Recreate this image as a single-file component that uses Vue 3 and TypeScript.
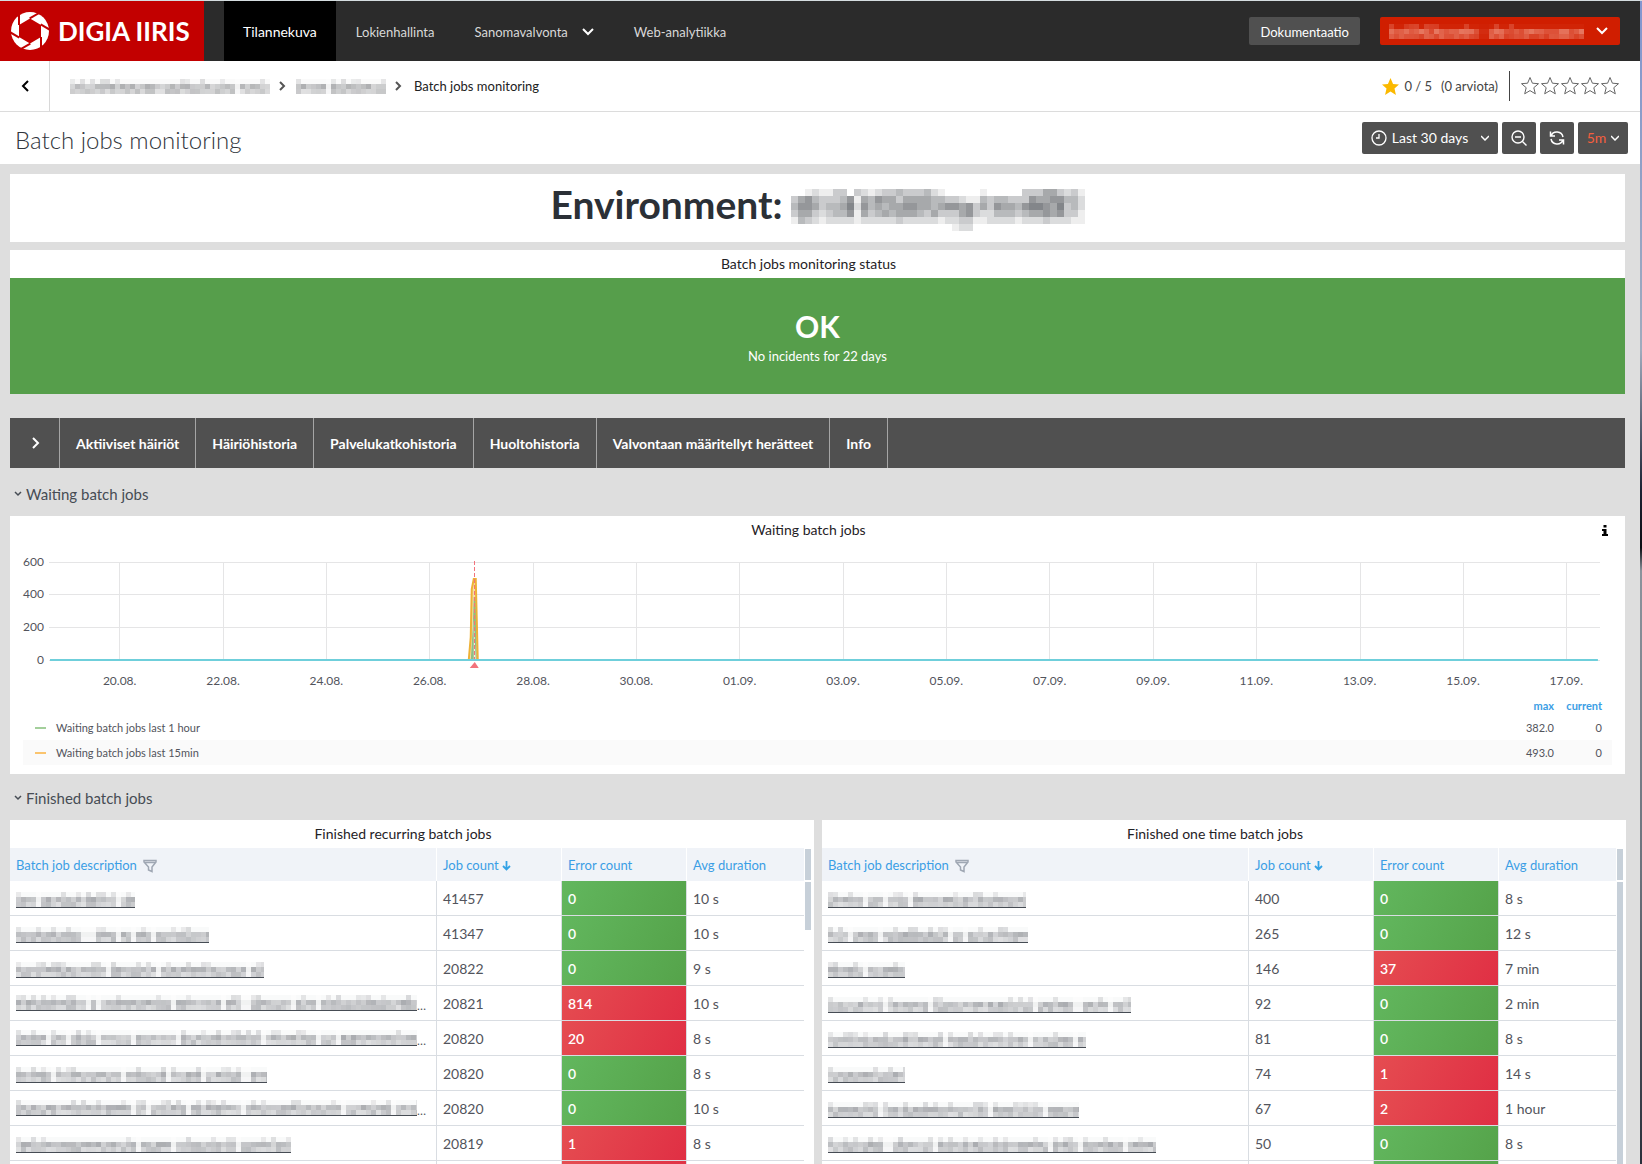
<script setup lang="ts">
import { computed, ref } from 'vue'

interface Job { name: number; count: string; errors: number; duration: string; cut?: boolean }
interface JobTable { title: string; jobs: Job[]; thumb: string }
interface Cell { x: number; y: number; o: number }

const navItems = ['Tilannekuva', 'Lokienhallinta', 'Sanomavalvonta', 'Web-analytiikka']
const tabs = ['Aktiiviset häiriöt', 'Häiriöhistoria', 'Palvelukatkohistoria', 'Huoltohistoria', 'Valvontaan määritellyt herätteet', 'Info']
const dates = ['20.08.', '22.08.', '24.08.', '26.08.', '28.08.', '30.08.', '01.09.', '03.09.', '05.09.', '07.09.', '09.09.', '11.09.', '13.09.', '15.09.', '17.09.']
const levels = [{ label: '600', y: 3 }, { label: '400', y: 35 }, { label: '200', y: 68 }, { label: '0', y: 101 }]
const series = [
  { label: 'Waiting batch jobs last 1 hour', color: '#a3cf9b', max: '382.0' },
  { label: 'Waiting batch jobs last 15min', color: '#fac46e', max: '493.0' },
]
const activeNav = ref(0)
const rating = ref(0)

const job = (name: number, count: string, errors: number, duration: string, cut = false): Job => ({ name, count, errors, duration, cut })
const tables: JobTable[] = [
  {
    title: 'Finished recurring batch jobs',
    thumb: 'short',
    jobs: [
      job(119, '41457', 0, '10 s'), job(193, '41347', 0, '10 s'), job(248, '20822', 0, '9 s'),
      job(401, '20821', 814, '10 s', true), job(401, '20820', 20, '8 s', true), job(251, '20820', 0, '8 s'),
      job(401, '20820', 0, '10 s', true), job(275, '20819', 1, '8 s'), job(0, '', 1, ''),
    ],
  },
  {
    title: 'Finished one time batch jobs',
    thumb: 'full',
    jobs: [
      job(198, '400', 0, '8 s'), job(200, '265', 0, '12 s'), job(77, '146', 37, '7 min'),
      job(303, '92', 0, '2 min'), job(258, '81', 0, '8 s'), job(77, '74', 1, '14 s'),
      job(251, '67', 2, '1 hour'), job(328, '50', 0, '8 s'), job(0, '', 0, ''),
    ],
  },
]

/* Repeatable noise, so a masked label always looks the same. */
const noise = (n: number): number => {
  const v = Math.sin(n * 127.1 + 11.7) * 43758.5453
  return v - Math.floor(v)
}
/* Mask tiles in three bands: ascenders, letter bodies and baseline. */
function mask(width: number, seed: number): Cell[] {
  const out: Cell[] = []
  const cols = Math.ceil(width / 5)
  for (let c = 0; c < cols; c++) {
    const k = seed * 97 + c
    const gap = c > 3 && noise(k + 0.3) < 0.09
    const tall = c === 0 || noise(k + 0.6) < 0.3
    out.push({ x: c * 5, y: 0, o: gap ? 0.02 : tall ? 0.12 + noise(k) * 0.1 : 0.03 })
    out.push({ x: c * 5, y: 5, o: gap ? 0.08 : 0.24 + noise(k + 0.1) * 0.24 })
    out.push({ x: c * 5, y: 10, o: gap ? 0.05 : 0.18 + noise(k + 0.2) * 0.2 })
  }
  return out
}
const hostRows = [
  '001211330321233433342100000100000333553231',
  '356433346154655355554433211434433365566442',
  '466534457264545566554566563536554677657342',
  '355323446153454555435333563224443455656331',
  '143212222122222322222122331122221222322211',
  '000000000000000000000001220000000000000000',
]
const hostCells = computed<Cell[]>(() => hostRows.flatMap((r, y) => [...r].map((d, x) => ({ x: x * 7, y: y * 7, o: Number(d) / 12 }))))
</script>

<template>
  <div class="shell">
    <header class="top">
      <a class="logo" href="#" aria-label="Digia Iiris">
        <svg width="38" height="38" viewBox="-19 -19 38 38" aria-hidden="true">
          <circle r="19" fill="#fff" />
          <path d="M11 -6V6L0 12.500L-11 6V-6L0 -12.500Z" fill="#c20000" />
          <g stroke="#c20000" stroke-width="2">
            <path v-for="i in 6" :key="i" d="M11 6V20" :transform="`rotate(${i * 60})`" />
          </g>
        </svg>
        <span>DIGIA IIRIS</span>
      </a>
      <nav class="nav">
        <a v-for="(n, i) in navItems" :key="n" href="#" :class="{ on: i === activeNav }" @click.prevent="activeNav = i">
          {{ n }}
          <svg v-if="i === 2" width="12" height="8" viewBox="0 0 12 8"><path d="M1 1l5 5 5-5" fill="none" stroke="#fff" stroke-width="2" /></svg>
        </a>
      </nav>
      <button class="docs" type="button">Dokumentaatio</button>
      <button class="user" type="button" aria-label="User menu">
        <svg class="mask" width="195" height="15" fill="#ffd9c9"><rect v-for="(c, i) in mask(195, 5)" :key="i" :x="c.x" :y="c.y" width="5" height="5" :opacity="c.o" /></svg>
        <svg width="12" height="8" viewBox="0 0 12 8"><path d="M1 1l5 5 5-5" fill="none" stroke="#fff" stroke-width="2" /></svg>
      </button>
    </header>

    <div class="crumbs">
      <button class="back" type="button" aria-label="Back">
        <svg width="8" height="12" viewBox="0 0 8 12"><path d="M7 1L2 6l5 5" fill="none" stroke="#000" stroke-width="2" /></svg>
      </button>
      <nav class="trail">
        <a href="#" aria-label="Level one"><svg class="mask" width="200" height="15" fill="#56585c"><rect v-for="(c, i) in mask(200, 2)" :key="i" :x="c.x" :y="c.y" width="5" height="5" :opacity="c.o" /></svg></a>
        <svg class="sep" width="8" height="12" viewBox="0 0 8 12"><path d="M1 2l4 4-4 4" fill="none" stroke="#555" stroke-width="2" /></svg>
        <a href="#" aria-label="Level two"><svg class="mask" width="90" height="15" fill="#56585c"><rect v-for="(c, i) in mask(90, 3)" :key="i" :x="c.x" :y="c.y" width="5" height="5" :opacity="c.o" /></svg></a>
        <svg class="sep" width="8" height="12" viewBox="0 0 8 12"><path d="M1 2l4 4-4 4" fill="none" stroke="#555" stroke-width="2" /></svg>
        <span>Batch jobs monitoring</span>
      </nav>
      <div class="score">
        <svg width="17" height="17" viewBox="0 0 20 20"><path d="M10 0l3 7 7 .6-5.300 4.800L16.400 20 10 15.900 3.600 20l1.700-7.600L0 7.600 7 7z" fill="#fbb900" /></svg>
        <span>0 / 5</span><span class="votes">(0 arviota)</span>
      </div>
      <div class="stars">
        <button v-for="s in 5" :key="s" type="button" :aria-label="`Rate ${s}`" @click="rating = s">
          <svg width="20" height="20" viewBox="0 0 20 20"><path d="M10 1.500l2.400 5.700 6.100.5-4.700 4 1.500 6.100L10 14.600l-5.300 3.200 1.500-6.100-4.700-4 6.100-.5z" :fill="s <= rating ? '#fbb900' : 'none'" stroke="#666" /></svg>
        </button>
      </div>
    </div>

    <div class="titlebar">
      <h1>Batch jobs monitoring</h1>
      <div class="tools">
        <button class="range" type="button">
          <svg width="16" height="16" viewBox="0 0 16 16" fill="none" stroke="#fff"><circle cx="8" cy="8" r="7" stroke-width="1.300" /><path d="M8 4v4H5" stroke-width="1.300" /></svg>
          <span>Last 30 days</span>
          <svg width="8" height="6" viewBox="0 0 8 6"><path d="M0 1l4 4 4-4" fill="none" stroke="#fff" stroke-width="1.500" /></svg>
        </button>
        <button class="sq" type="button" aria-label="Zoom out">
          <svg width="16" height="16" viewBox="0 0 16 16" fill="none" stroke="#fff" stroke-width="1.400"><circle cx="7" cy="7" r="6" /><path d="M4 7h6M11.500 11.500l4 4" /></svg>
        </button>
        <button class="sq" type="button" aria-label="Refresh">
          <svg width="16" height="16" viewBox="0 0 16 16" fill="none" stroke="#fff" stroke-width="1.500"><path d="M2 6a6.300 6.300 0 0 1 12 1M14 10a6.300 6.300 0 0 1-12-1M1.500 1.500V6H6M14.500 14.500V10H10" /></svg>
        </button>
        <button class="every" type="button">
          <span>5m</span>
          <svg width="8" height="6" viewBox="0 0 8 6"><path d="M0 1l4 4 4-4" fill="none" stroke="#fff" stroke-width="1.500" /></svg>
        </button>
      </div>
    </div>

    <main class="board">
      <section class="panel host">
        <h2>Environment:</h2>
        <svg class="mask" width="294" height="42" fill="#2b3036"><rect v-for="(c, i) in hostCells" :key="i" :x="c.x" :y="c.y" width="7" height="7" :opacity="c.o" /></svg>
      </section>

      <section class="panel">
        <h3>Batch jobs monitoring status</h3>
        <div class="ok"><strong>OK</strong><span>No incidents for 22 days</span></div>
      </section>

      <nav class="tabs">
        <button class="open" type="button" aria-label="Expand">
          <svg width="8" height="12" viewBox="0 0 8 12"><path d="M1 1l5 5-5 5" fill="none" stroke="#fff" stroke-width="2" /></svg>
        </button>
        <button v-for="t in tabs" :key="t" type="button">{{ t }}</button>
      </nav>

      <button class="fold" type="button">
        <svg width="8" height="6" viewBox="0 0 8 6"><path d="M1 1l3 3 3-3" fill="none" stroke="#464c54" stroke-width="1.500" /></svg>Waiting batch jobs
      </button>

      <section class="panel chart">
        <h3>Waiting batch jobs</h3>
        <button class="info" type="button" aria-label="Panel info">
          <svg width="6" height="11" viewBox="0 0 6 11"><path d="M1.500 0h3v2.500h-3zM0 4h4.500v5H6v2H0V9h1.500V6H0z" /></svg>
        </button>
        <div class="plot">
          <div class="levels"><span v-for="l in levels" :key="l.label">{{ l.label }}</span></div>
          <svg class="area" width="100%" height="112">
            <g stroke="#e5e5e6" shape-rendering="crispEdges">
              <line v-for="l in levels" :key="l.y" x1="0" x2="100%" :y1="l.y" :y2="l.y" />
              <line v-for="(d, i) in dates" :key="d" :x1="`${4.56 + i * 6.664}%`" :x2="`${4.56 + i * 6.664}%`" y1="3" y2="101" />
            </g>
            <svg x="27.45%" overflow="visible">
              <path d="M-6 101L-4 78L-3 30L-1 20H1L2 60L3 101Z" fill="#f6dfa4" />
              <path d="M-4 101L-2 70L-1 38L1 38L2 101Z" fill="#8fbf85" />
              <path d="M-1 101V60L1 101Z" fill="#f7efdc" />
              <path d="M-6 101L-4 78L-3 30L-1 20H1L2 60L3 101" fill="none" stroke="#eeb136" stroke-width="2" />
              <path d="M0 2V101" stroke="#f2737c" stroke-dasharray="4 2" shape-rendering="crispEdges" />
              <path d="M-5 109h9L0 103z" fill="#f2737c" />
            </svg>
            <rect x="1" y="100" width="99.800%" height="2" fill="#6fcfdb" />
          </svg>
        </div>
        <div class="dates"><span v-for="d in dates" :key="d">{{ d }}</span></div>
        <table class="legend">
          <thead><tr><th></th><th class="num">max</th><th class="num cur">current</th></tr></thead>
          <tbody>
            <tr v-for="s in series" :key="s.label">
              <td><i :style="{ background: s.color }"></i>{{ s.label }}</td><td class="num">{{ s.max }}</td><td class="num cur">0</td>
            </tr>
          </tbody>
        </table>
      </section>

      <button class="fold" type="button">
        <svg width="8" height="6" viewBox="0 0 8 6"><path d="M1 1l3 3 3-3" fill="none" stroke="#464c54" stroke-width="1.500" /></svg>Finished batch jobs
      </button>

      <div class="pair">
        <section v-for="(t, ti) in tables" :key="t.title" class="panel">
          <h3>{{ t.title }}</h3>
          <div class="scroller">
            <table class="jobs">
              <colgroup><col /><col class="c" /><col class="c" /><col class="d" /></colgroup>
              <thead>
                <tr>
                  <th>Batch job description
                    <svg width="14" height="14" viewBox="0 0 14 14"><path d="M1 1.500h12v1.500L9 8v4.500L5.500 11V8L1 3zM1 3.500h12" fill="none" stroke="#9fa7b3" stroke-width="1.500" /></svg>
                  </th>
                  <th>Job count
                    <svg class="arrow" width="9" height="10" viewBox="0 0 9 10"><path d="M4.500 0v8M1 5l3.500 3.500L8 5" fill="none" stroke="#33a2e5" stroke-width="1.800" /></svg>
                  </th>
                  <th>Error count</th>
                  <th>Avg duration</th>
                </tr>
              </thead>
              <tbody>
                <tr v-for="(j, i) in t.jobs" :key="i">
                  <td>
                    <a v-if="j.name" class="job" href="#" :aria-label="`Job ${i + 1}`" :style="{ width: j.name + 'px' }"><svg class="mask" width="100%" height="15" fill="#4f535b"><rect v-for="(c, k) in mask(j.name, ti * 20 + i + 7)" :key="k" :x="c.x" :y="c.y" width="5" height="5" :opacity="c.o" /></svg></a><span v-if="j.cut" class="cut">…</span>
                  </td>
                  <td>{{ j.count }}</td>
                  <td :class="['err', { bad: j.errors > 0 }]">{{ j.count ? j.errors : '' }}</td>
                  <td>{{ j.duration }}</td>
                </tr>
              </tbody>
            </table>
            <div class="rail"><i></i><i :class="t.thumb"></i></div>
          </div>
        </section>
      </div>
    </main>
  </div>
</template>

<style>
body { margin: 0; overflow: hidden; }
</style>

<style scoped>
* { box-sizing: border-box; }
.shell {
  height: 100vh; display: flex; flex-direction: column; overflow: hidden;
  border-top: 1px solid #d5dde0; padding-right: 2px;
  background: linear-gradient(#dedede, #dedede) left / calc(100% - 2px) 100% no-repeat, linear-gradient(#8296cf, #9fabbd 30%, #1b2233 42%, #0b0d12 47%, #8b939c 49%, #6b727c 75%, #2a2f3a);
  font-family: Lato, "Noto Sans", sans-serif; font-size: 13px; line-height: 20px; color: #222;
}
button { font: inherit; color: inherit; border: 0; background: none; padding: 0; margin: 0; cursor: pointer; }
a { color: inherit; text-decoration: none; }
h1, h2, h3 { margin: 0; font-weight: 400; }
svg { display: block; flex: none; }

.top { height: 60px; flex: none; display: flex; align-items: center; background: #2b2b2b; color: #d8d8d8; padding-right: 20px; }
.logo { width: 204px; height: 60px; display: flex; align-items: center; gap: 9px; padding-left: 11px; background: #c20000; color: #fff; font-size: 26px; font-weight: 700; line-height: 32px; white-space: nowrap; }
.nav { display: flex; align-self: stretch; margin-left: 20px; flex: 1; }
.nav a { display: flex; align-items: center; gap: 14px; padding: 2px 20px 0; }
.nav .on { background: #000; color: #fff; font-size: 14px; padding: 2px 19px 0; }
.docs { height: 28px; padding: 2px 11px 0; background: #505050; color: #fff; border-radius: 2px; margin-right: 20px; }
.user { height: 28px; width: 240px; display: flex; align-items: center; justify-content: space-between; padding: 0 12px 0 9px; background: #d01e00; border-radius: 2px; }

.crumbs { height: 51px; flex: none; display: flex; align-items: center; background: #fff; border-bottom: 1px solid #dcdcdc; padding-right: 20px; }
.back { width: 50px; height: 50px; display: flex; align-items: center; justify-content: center; border-right: 1px solid #d8d8d8; }
.trail { flex: 1; display: flex; align-items: center; padding-left: 20px; }
.sep { margin: 0 9px; }
.trail span { padding-left: 2px; }
.score { display: flex; align-items: center; gap: 5px; color: #444; height: 30px; padding-right: 11px; border-right: 1px solid #444; }
.votes { margin-left: 4px; }
.stars { display: flex; margin-left: 10px; }

.titlebar { height: 52px; flex: none; display: flex; align-items: center; justify-content: space-between; background: #fff; padding: 0 12px 0 15px; }
h1 { font-size: 24px; line-height: 32px; font-weight: 300; color: #30353c; padding-top: 4px; }
.tools { display: flex; gap: 4px; color: #fff; }
.tools button { height: 32px; display: flex; align-items: center; justify-content: center; background: #505050; border-radius: 2px; }
.tools .range { width: 136px; gap: 5px; font-size: 14px; }
.range span { padding-right: 8px; }
.tools .sq { width: 34px; }
.tools .every { width: 50px; gap: 5px; font-size: 14px; }
.every span { color: #f55f3e; }

.board { flex: 1; min-height: 0; display: flex; flex-direction: column; padding: 10px 15px 0 10px; }
.panel { background: #fff; position: relative; min-width: 0; }
h3 { height: 28px; line-height: 28px; text-align: center; padding-right: 18px; font-size: 14px; color: #1f2226; }
.host { height: 68px; flex: none; display: flex; justify-content: center; gap: 8px; margin-bottom: 8px; }
h2 { font-size: 39px; line-height: 60px; font-weight: 700; color: #2b3036; }
.host .mask { margin-top: 15px; }
.ok { height: 116px; display: flex; flex-direction: column; align-items: center; background: #569e4b; color: #fff; padding-top: 28px; }
.ok strong { font-size: 30px; line-height: 40px; }
.tabs { height: 50px; flex: none; display: flex; margin-top: 24px; background: #505050; color: #fff; font-size: 14px; font-weight: 700; }
.tabs button { padding: 2px 16px 0; border-right: 1px solid #a5a5a5; }
.tabs .open { width: 50px; padding: 0 0 0 3px; display: flex; align-items: center; justify-content: center; }
.fold { height: 48px; flex: none; display: flex; align-items: center; gap: 4px; padding: 4px 0 0 4px; font-size: 15px; color: #464c54; }

.chart { height: 258px; flex: none; margin-bottom: -2px; }
.info { position: absolute; right: 17px; top: 9px; }
.plot { display: flex; margin-top: 15px; font-size: 12px; color: #52545c; }
.levels { width: 39px; padding-right: 5px; text-align: right; display: grid; grid-template-rows: 32px 33px 33px 14px; line-height: 6px; }
.area { flex: 1; min-width: 0; margin-right: 25px; overflow: visible; }
.dates { display: grid; grid-template-columns: repeat(15, 1fr); margin: 0 7px 0 58px; text-align: center; font-size: 12px; height: 26px; color: #52545c; }
.legend { width: calc(100% - 26px); margin-left: 13px; border-spacing: 0; font-size: 11px; line-height: 18px; color: #52545c; }
.legend th { height: 18px; padding: 0; color: #3b9ee5; font-weight: 700; }
.legend td { height: 25px; padding: 0; }
.legend tbody tr:nth-child(2) { background: #fafafa; }
.legend .num { width: 60px; text-align: right; }
.legend .num.cur { width: 58px; padding-right: 10px; }
.legend i { display: inline-block; width: 11px; height: 2px; margin: 0 10px 2px 12px; vertical-align: middle; }

.pair { flex: 1; min-height: 0; display: grid; grid-template-columns: 1fr 1fr; gap: 8px; margin-right: -1px; overflow: hidden; }
.scroller { display: flex; }
.jobs { flex: 1; min-width: 0; table-layout: fixed; border-spacing: 0; color: #52545c; font-size: 14px; }
.c { width: 125px; }
.d { width: 117px; }
.jobs th { height: 33px; padding: 1px 6px 0; text-align: left; font-size: 13px; font-weight: 400; color: #3b9ee5; background: #f0f3f8; border-right: 1px solid #fff; }
.jobs th svg { display: inline-block; vertical-align: -3px; margin-left: 3px; }
.jobs th .arrow { vertical-align: -1px; margin-left: 0; }
.jobs td { height: 35px; padding: 2px 6px 0; border-right: 1px solid #d9dde2; border-bottom: 1px solid #d9dde2; white-space: nowrap; overflow: hidden; }
.jobs th:last-child, .jobs td:last-child { border-right: 0; }
.jobs .err { background: linear-gradient(120deg, #62b75e, #55a34a) padding-box; color: #fff; font-weight: 600; }
.jobs .bad { background: linear-gradient(120deg, #e54d51, #e02f44) padding-box; }
.job { display: inline-block; vertical-align: middle; border-bottom: 1px solid #464c54; }
.cut { vertical-align: -3px; font-size: 12px; }
.rail { width: 10px; padding: 1px 3px 0 1px; display: flex; flex-direction: column; gap: 2px; }
.rail i { background: #c7d0d9; height: 31px; }
.rail .short { height: 48px; }
.rail .full { flex: 1; }
</style>
